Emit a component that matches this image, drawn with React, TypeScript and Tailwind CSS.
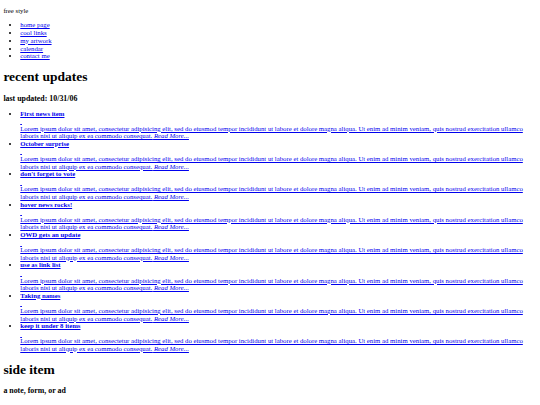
import React from 'react';

const navLinks = ['home page', 'cool links', 'my artwork', 'calendar', 'contact me'];

const news = [
  'First news item',
  'October surprise',
  "don't forget to vote",
  'hover news rocks!',
  'OWD gets an update',
  'use as link list',
  'Taking names',
  'keep it under 8 items',
];

const lorem =
  'Lorem ipsum dolor sit amet, consectetur adipisicing elit, sed do eiusmod tempor incididunt ut labore et dolore magna aliqua. Ut enim ad minim veniam, quis nostrud exercitation ullamco laboris nisi ut aliquip ex ea commodo consequat.';

const App: React.FC = () => {
  return (
    <div className="[zoom:0.421875] m-2 font-['Liberation_Serif',serif] text-[16px] leading-[18.4px] text-black">
      <p className="my-4">free style</p>

      {/* main nav */}
      <ul className="my-4 list-disc pl-10">
        {navLinks.map((l) => (
          <li key={l}>
            <a href="#" className="text-[#0000ee] underline">
              {l}
            </a>
          </li>
        ))}
      </ul>

      <h1 className="my-[0.67em] text-[2em] leading-[36.8px] font-bold">recent updates</h1>
      <h3 className="mt-[1em] mb-4 text-[1.17em] leading-[21.5px] font-bold">last updated: 10/31/06</h3>

      {/* news list */}
      <ul className="my-4 list-disc pl-10 leading-[18px]">
        {news.map((title) => (
          <li key={title}>
            <a href="#" className="block text-[#0000ee] underline">
              <span className="block font-bold">{title}</span>
              <span className="block">&nbsp;</span>
              <span className="block">
                {lorem} <em>Read More...</em>
              </span>
            </a>
          </li>
        ))}
      </ul>

      <h1 className="my-[0.67em] text-[2em] leading-[36.8px] font-bold">side item</h1>
      <h3 className="my-[1em] text-[1.17em] leading-[21.5px] font-bold">a note, form, or ad</h3>
      <p className="my-4">{lorem}</p>
    </div>
  );
};

export default App;
